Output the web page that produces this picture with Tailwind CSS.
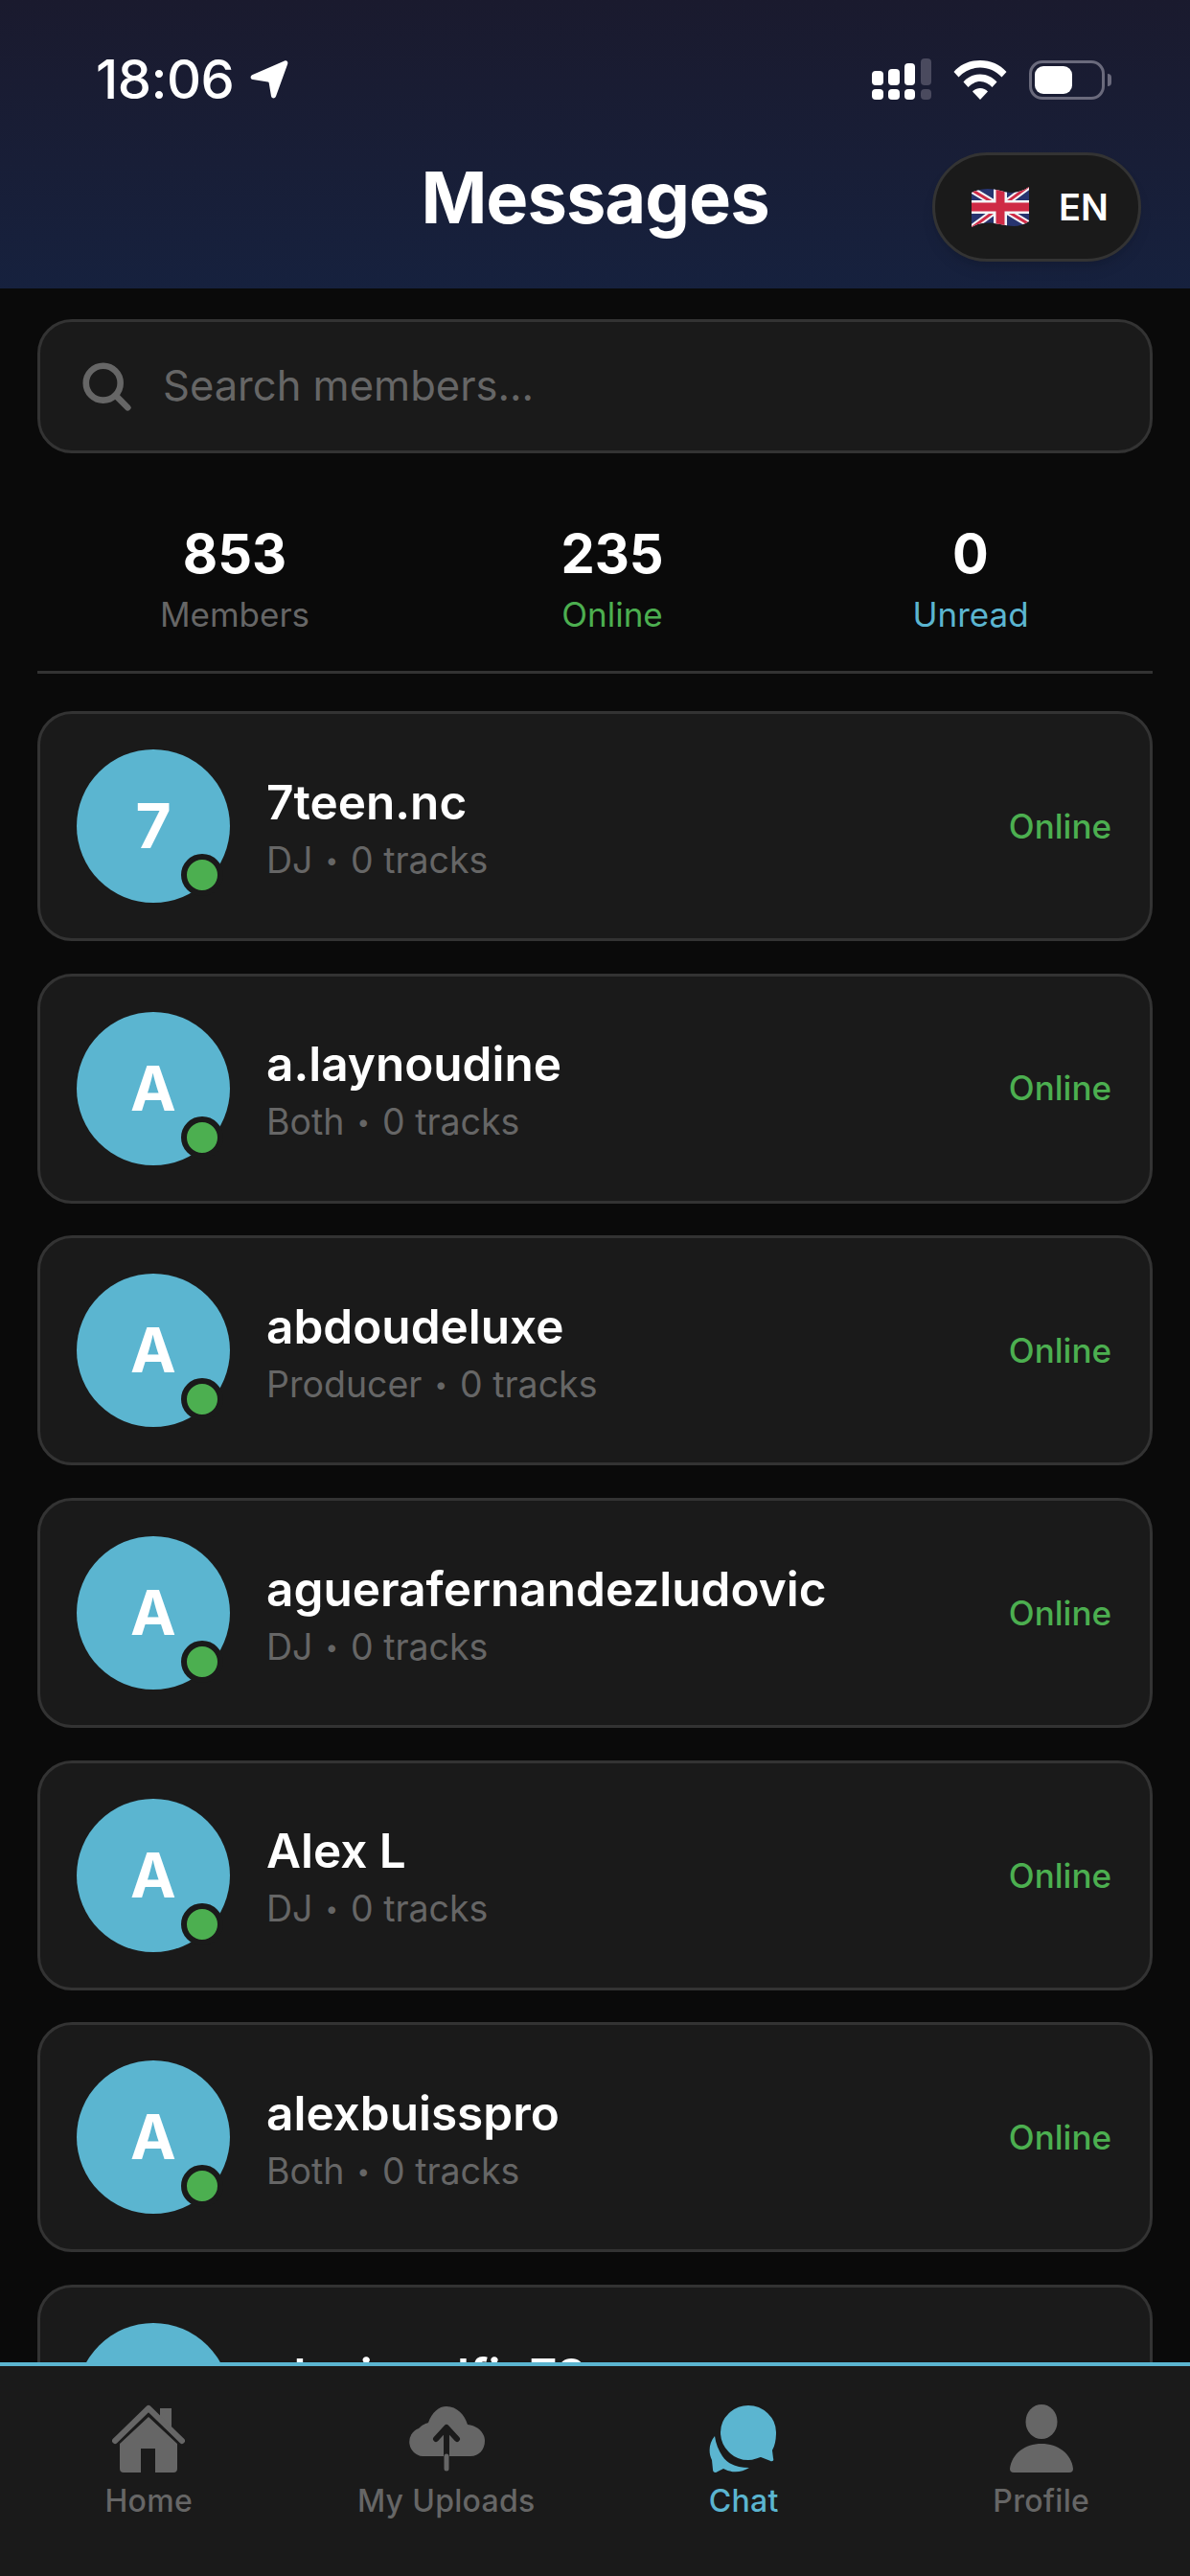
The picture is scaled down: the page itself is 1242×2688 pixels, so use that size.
<!DOCTYPE html>
<html lang="en">
<head>
    <meta charset="UTF-8">
    <meta name="viewport" content="width=device-width, initial-scale=1.0">
    <title>Messages</title>
    <script src="https://cdn.jsdelivr.net/npm/@tailwindcss/browser@4"></script>
</head>
<body class="bg-[#0a0a0a] font-['Inter',sans-serif]">
<div class="w-[1242px] h-[2688px] flex flex-col overflow-hidden">

    <!-- Header -->
    <header class="relative h-[301px] shrink-0 bg-gradient-to-b from-[#1a1a2e] to-[#16213e] text-white">
        <div class="flex items-center justify-between h-[166px] pl-[100px] pr-[82px]">
            <div class="flex items-center gap-[16px]">
                <span class="text-[56px] font-medium tracking-[-0.5px]">18:06</span>
                <svg class="w-[42px] h-[42px]" viewBox="0 0 42 42" fill="#fff"><path d="M37 1.500c2.200-.8 4 1.100 3.200 3.300L28 38.500c-1 2.700-4.500 2.600-5-.2l-2.300-13.800c-.1-.6-.5-1-1.100-1.100L4 21c-3-.5-3.200-4-.4-5.100z"/></svg>
            </div>
            <div class="flex items-center">
                <svg class="w-[64px] h-[44px] mr-[21px]" viewBox="0 0 64 44" fill="#fff">
                    <rect x="0" y="13" width="12" height="15" rx="4"/><rect x="17" y="11" width="12" height="17" rx="4"/><rect x="34" y="5" width="11" height="23" rx="4"/><rect x="51" y="0" width="11" height="28" rx="4" fill="#4a4a5e"/>
                    <rect x="0" y="32" width="12" height="11" rx="4"/><rect x="17" y="32" width="12" height="11" rx="4"/><rect x="34" y="32" width="11" height="11" rx="4"/><rect x="51" y="32" width="11" height="11" rx="4" fill="#4a4a5e"/>
                </svg>
                <svg class="w-[56px] h-[42px] mr-[23px]" viewBox="0 0 56 42" fill="#fff">
                    <path d="M0.500 13C7.500 5 17 1 28 1s20.500 4 27.500 12l-5 5.500C44.500 12 36.500 8.500 28 8.500S11.500 12 5.500 18.500z"/>
                    <path d="M10.500 23.500C15 18.500 21 15.500 28 15.500s13 3 17.500 8l-5 5.500C37 25.500 33 23 28 23s-9 2.500-12.500 6z"/>
                    <path d="M20 33.500c2-2 4.800-3.500 8-3.500s6 1.500 8 3.500l-8 8.500z"/>
                </svg>
                <div class="flex items-center gap-[3px]">
                    <div class="w-[79px] h-[41px] rounded-[14px] border-[3px] border-[#6a6a7c] p-[3px]">
                        <div class="w-[39px] h-[29px] rounded-[9px] bg-white"></div>
                    </div>
                    <div class="w-[4px] h-[13px] rounded-r-full bg-[#6a6a7c]"></div>
                </div>
            </div>
        </div>
        <h1 class="text-center text-[74px] tracking-[-1px] font-bold leading-[92px] -mt-[6px]">Messages</h1>
        <div class="absolute left-[973px] top-[159px] w-[218px] h-[114px] rounded-full bg-[#1a1a1a] border-[3px] border-[#333333] flex items-center pl-[38px] gap-[31px] shadow-lg">
            <svg class="w-[60px] h-[44px]" viewBox="0 0 60 44">
                <defs><clipPath id="flag"><path d="M0 7C10 2 20 2 30 5S50 8 60 1V37C50 44 40 42 30 40S10 37 0 43Z"/></clipPath></defs>
                <g clip-path="url(#flag)">
                    <rect width="60" height="44" fill="#27346f"/>
                    <path d="M0 4L60 40M60 0L0 44" stroke="#f4f4f6" stroke-width="7"/>
                    <path d="M0 4L60 40M60 0L0 44" stroke="#cf2a45" stroke-width="3"/>
                    <path d="M30 0V44M0 22H60" stroke="#f4f4f6" stroke-width="14"/>
                    <path d="M30 0V44M0 22H60" stroke="#cf2a45" stroke-width="9"/>
                </g>
            </svg>
            <span class="text-[38px] font-semibold leading-none">EN</span>
        </div>
    </header>

    <!-- Search, stats and member list -->
    <main class="flex-1 min-h-0 overflow-hidden px-[39px] pt-[32px]">
        <div class="h-[140px] rounded-[36px] bg-[#1a1a1a] border-[3px] border-[#333333] flex items-center pl-[44px] gap-[33px]">
            <svg class="w-[51px] h-[51px] shrink-0" viewBox="0 0 54 54" fill="none" stroke="#666666" stroke-width="7" stroke-linecap="round"><circle cx="23" cy="23" r="19"/><path d="M37 37L50 50"/></svg>
            <span class="text-[43.500px] text-[#666666]">Search members...</span>
        </div>

        <div class="h-[230px] border-b-[3px] border-[#333333] flex pt-[71px] text-center">
            <div class="w-[412px]">
                <div class="text-[56px] font-bold text-white leading-[68px]">853</div>
                <div class="text-[35px] text-[#666666] leading-[42px] mt-[8px]">Members</div>
            </div>
            <div class="w-[376px]">
                <div class="text-[56px] font-bold text-white leading-[68px]">235</div>
                <div class="text-[35px] text-[#4caf50] leading-[42px] mt-[8px]">Online</div>
            </div>
            <div class="w-[372px]">
                <div class="text-[56px] font-bold text-white leading-[68px]">0</div>
                <div class="text-[35px] text-[#5bb5d0] leading-[42px] mt-[8px]">Unread</div>
            </div>
        </div>

        <div id="members" class="flex flex-col gap-[33.700px] pt-[39px]"></div>
    </main>

    <!-- Tab bar -->
    <nav class="h-[223px] shrink-0 bg-[#1a1a1a] border-t-[4px] border-[#5bb5d0] grid grid-cols-4 pt-[40px] text-[32px] tracking-[0.3px] font-medium text-[#666666]">
        <div class="flex flex-col items-center">
            <svg class="w-[76px] h-[72px]" viewBox="0 0 76 72" fill="#666666">
                <path d="M38 13L8 41V67a4 4 0 0 0 4 4H30V46H45V71H64a4 4 0 0 0 4-4V41Z"/>
                <path d="M50 4h12v23L50 15Z"/>
                <path d="M3 38L38 4l35 34" fill="none" stroke="#666666" stroke-width="6" stroke-linecap="round" stroke-linejoin="round"/>
            </svg>
            <span class="mt-[9px] leading-[40px]">Home</span>
        </div>
        <div class="flex flex-col items-center">
            <svg class="w-[82px] h-[72px]" viewBox="0 0 82 72">
                <path d="M16 54A15 15 0 0 1 12 25C16 21 19 20 22 19C26 8 33 2 41 2C52 2 60 11 63 21C73 22 81 29 81 38C81 47 75 54 66 54Z" fill="#666666"/>
                <path d="M41 54V25M30 36L41 24L52 36" fill="none" stroke="#1a1a1a" stroke-width="6" stroke-linecap="round" stroke-linejoin="round"/>
                <path d="M41 54V67" stroke="#666666" stroke-width="5" stroke-linecap="round"/>
            </svg>
            <span class="mt-[9px] leading-[40px]">My Uploads</span>
        </div>
        <div class="flex flex-col items-center text-[#5bb5d0]">
            <svg class="w-[72px] h-[72px]" viewBox="0 0 72 72">
                <path d="M6 33C0 40 -1 50 3 58L4 68C4 71 7 72 9 70L15 67C24 72 34 71 42 66C30 66 20 63 14 54C10 48 7 41 6 33Z" fill="#5bb5d0"/>
                <path d="M41 0C25 0 11 13 11 29C11 45 24 59 41 59C46 59 50 57 54 56L64 60C67 61 69 59 68 56L67 48C70 43 71 36 71 29C71 13 57 0 41 0Z" fill="#5bb5d0" stroke="#1a1a1a" stroke-width="2"/>
            </svg>
            <span class="mt-[9px] leading-[40px]">Chat</span>
        </div>
        <div class="flex flex-col items-center">
            <svg class="w-[66px] h-[72px]" viewBox="0 0 66 72" fill="#666666">
                <ellipse cx="33" cy="18" rx="16.500" ry="18"/>
                <path d="M4 71A4 4 0 0 1 0 67C2 51 16 41 33 41S64 51 66 67A4 4 0 0 1 62 71Z"/>
            </svg>
            <span class="mt-[9px] leading-[40px]">Profile</span>
        </div>
    </nav>
</div>

<script>
    const members = [
        { name: "7teen.nc", role: "DJ" },
        { name: "a.laynoudine", role: "Both" },
        { name: "abdoudeluxe", role: "Producer" },
        { name: "aguerafernandezludovic", role: "DJ" },
        { name: "Alex L", role: "DJ" },
        { name: "alexbuisspro", role: "Both" },
        { name: "alexisgolfin78", role: "DJ" }
    ];

    document.getElementById('members').innerHTML = members.map(m => `
        <div class="h-[240px] shrink-0 rounded-[36px] bg-[#1a1a1a] border-[3px] border-[#333333] flex items-center pl-[38px] pr-[40px]">
            <div class="relative w-[160px] h-[160px] shrink-0 rounded-full bg-[#5bb5d0] flex items-center justify-center text-white text-[64px] font-bold">
                ${m.name[0].toUpperCase()}
                <span class="absolute right-[7px] bottom-[7px] w-[44px] h-[44px] rounded-full bg-[#4caf50] border-[6px] border-[#1a1a1a]"></span>
            </div>
            <div class="flex-1 min-w-0 ml-[38px]">
                <div class="text-[49.500px] font-semibold text-white leading-[58px] -mt-[2px]">${m.name}</div>
                <div class="text-[37.500px] text-[#666666] leading-[44px] mt-[10px] -mb-[5px] flex items-center">${m.role}<span class="text-[24px] mx-[13px]">•</span>0 tracks</div>
            </div>
            <span class="text-[35px] font-medium text-[#4caf50]">Online</span>
        </div>`).join('');
</script>
</body>
</html>
